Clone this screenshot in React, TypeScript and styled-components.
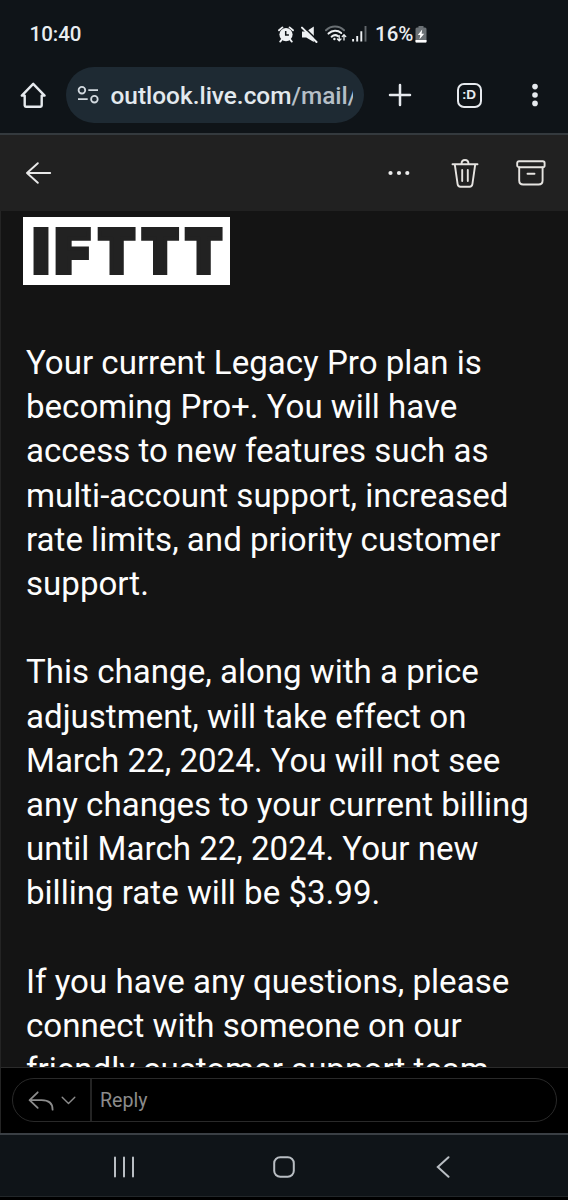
import React from "react";
import styled, { createGlobalStyle } from "styled-components";

const GlobalStyle = createGlobalStyle`
  * { box-sizing: border-box; }
  body { margin: 0; background: #000; }
  svg { display: block; flex: none; }
`;

const Phone = styled.div`
  width: 568px;
  height: 1200px;
  display: flex;
  flex-direction: column;
  overflow: hidden;
  background: #0f1418;
  font-family: Roboto, "Liberation Sans", sans-serif;
  color: #e9edf0;
`;

const StatusBar = styled.header`
  height: 67px;
  padding: 1px 141px 0 29.5px;
  display: flex;
  align-items: center;
  justify-content: space-between;
`;

const Clock = styled.span`
  font-size: 20.5px;
  font-weight: 500;
`;

const StatusIcons = styled.div`
  display: flex;
  align-items: center;
`;

const IconSlot = styled.span<{ $gap: number }>`
  margin-right: ${(p) => p.$gap}px;
`;

const Battery = styled.span`
  font-size: 20.5px;
  font-weight: 500;
  margin-left: 8px;
  width: 40px;
  white-space: nowrap;
`;

const BrowserBar = styled.div`
  height: 68px;
  padding-left: 20px;
  display: flex;
  align-items: flex-start;
  border-bottom: 2px solid #343a3e;
`;

const BarButton = styled.button<{ $width: number }>`
  width: ${(p) => p.$width}px;
  height: 56px;
  padding: 0;
  border: 0;
  background: none;
  color: #e6eaee;
  display: flex;
  align-items: center;
  justify-content: center;
`;

const AddressBar = styled.div`
  width: 298px;
  height: 56px;
  margin-left: 20px;
  padding: 0 11px;
  border-radius: 28px;
  background: #1e2a33;
  display: flex;
  align-items: center;
`;

const Address = styled.span`
  margin-left: 11.5px;
  width: 242.5px;
  overflow: hidden;
  white-space: nowrap;
  font-size: 24.4px;
  font-weight: 500;
  color: #e3e9ee;
`;

const AddressPath = styled.span`
  color: #b5bfc7;
`;

const MailToolbar = styled.nav`
  height: 76px;
  padding: 0 22.5px 1px 25px;
  background: #212121;
  display: flex;
  align-items: center;
`;

const ToolbarActions = styled.div`
  margin-left: auto;
  display: flex;
  align-items: center;
  gap: 37px;
`;

const MoreSlot = styled.span`
  margin-right: 4px;
`;

const Message = styled.main`
  height: 856px;
  padding: 6px 0 0 22px;
  overflow: hidden;
  background: #141414;
  border-left: 1px solid #242424;
`;

const LogoPlate = styled.div`
  width: 207px;
  height: 68px;
  background: #fff;
`;

const LogoText = styled.text`
  font-family: Inter, sans-serif;
  font-weight: 900;
  font-size: 61px;
  fill: #222;
  stroke: #222;
  stroke-width: 4px;
  stroke-linejoin: miter;
`;

const Copy = styled.div`
  padding: 56px 0 0 3px;
  font-size: 33.1px;
  line-height: 44.2px;
  color: #fdfdfd;
  white-space: pre;
`;

const Paragraph = styled.p`
  margin: 0 0 44.2px;
`;

const ReplyArea = styled.footer`
  height: 66px;
  padding: 10px 11px 0 11px;
  background: #000;
  border-top: 1px solid #2b2b2b;
  border-left: 1px solid #242424;
`;

const ReplyBox = styled.div`
  height: 44px;
  border: 1px solid #292929;
  border-radius: 22px;
  display: flex;
  align-items: stretch;
`;

const ReplyMode = styled.div`
  width: 79px;
  padding: 1px 0 0 14.5px;
  border-right: 2px solid #242424;
  display: flex;
  align-items: center;
  gap: 7px;
`;

const ReplyLabel = styled.span`
  padding-left: 8px;
  font-size: 19.6px;
  line-height: 43px;
  color: #8b8b8b;
`;

const SystemNav = styled.div`
  height: 63px;
  border-top: 2px solid #3a3f44;
  display: flex;
  align-items: center;
  padding: 2px 45px 0 44px;
`;

const NavButton = styled.div`
  flex: 1;
  display: flex;
  justify-content: center;
  color: #b9bec3;
`;

const ScreenEdge = styled.div`
  height: 4px;
  border-top: 1px solid #22272a;
  background: #000;
`;

const AlarmIcon = () => (
  <svg width="16" height="17" viewBox="0 0 16 17">
    <circle cx="8" cy="8.6" r="6.6" fill="#eef1f3" />
    <path d="M1 4.3 4.4 1.4M15 4.3 11.6 1.4M3.8 13.6 2.2 15.6M12.2 13.6l1.6 2" stroke="#eef1f3" strokeWidth="1.8" strokeLinecap="round" />
    <path d="M7.7 5v4h3.2" fill="none" stroke="#0f1418" strokeWidth="1.5" />
  </svg>
);

const MuteIcon = () => (
  <svg width="17" height="17" viewBox="0 0 17 17">
    <path d="M1 5.400h4.200L12.800 0.500v15.600L5.200 11.600H1z" fill="#eef1f3" />
    <path d="M2 .2 16.400 14.400" stroke="#0f1418" strokeWidth="1.500" />
    <path d="M1 1.600 15.500 16" stroke="#eef1f3" strokeWidth="2" strokeLinecap="round" />
  </svg>
);

const WifiIcon = () => (
  <svg width="22" height="18" viewBox="0 0 22 18" fill="none" strokeLinecap="round">
    <path d="M1 5.2C6 .3 14 .3 19 5.2" stroke="#6a7074" strokeWidth="2" />
    <path d="M3.5 8.6C7.4 5 12.6 5 16.2 8" stroke="#eef1f3" strokeWidth="2" />
    <path d="M6.6 11.7c2-1.8 4.4-2 6.4-.6" stroke="#eef1f3" strokeWidth="2" />
    <circle cx="9.4" cy="14" r="1.2" fill="#eef1f3" />
    <path d="M14.2 10.6v5M12.4 14l1.8 1.9L16 14M19 15v-5M17.2 11.6 19 9.7l1.8 1.9" stroke="#eef1f3" strokeWidth="1.3" />
  </svg>
);

const SignalIcon = () => (
  <svg width="15" height="16" viewBox="0 0 15 16">
    <path d="M1.1 13v2.6M5.2 10v5.6M9.3 5.3v10.3" stroke="#eef1f3" strokeWidth="1.9" />
    <path d="M13.5 0v15.6" stroke="#62686c" strokeWidth="1.9" />
  </svg>
);

const BatteryIcon = () => (
  <svg width="12" height="17" viewBox="0 0 12 17">
    <path d="M3.500 0h5v1.600H10q1.500 0 1.500 1.500V15.400q0 1.200-1.400 1.200H1.900Q.5 16.600.5 15.400V3.100Q.5 1.600 2 1.600h1.500z" fill="#6b7175" />
    <path d="M.5 14h11v1.400q0 1.200-1.400 1.200H1.900Q.5 16.600.5 15.400z" fill="#fff" />
    <path d="M7.200 3.600 2.800 9h2.500l-.8 4.200L9.200 7.800H6.600z" fill="#fff" />
  </svg>
);

const HomeIcon = () => (
  <svg width="28" height="28" viewBox="0 0 28 28" fill="none" stroke="currentColor" strokeWidth="2.400" strokeLinejoin="round" strokeLinecap="round">
    <path d="M2.800 14.600h2.900v9.900q0 1.200 1.200 1.200h14.600q1.200 0 1.200-1.200v-9.900h2.900L14.200 2.800z" />
  </svg>
);

const SiteIcon = () => (
  <svg width="22" height="18" viewBox="0 0 22 18" fill="none" stroke="#d3dae0" strokeWidth="1.800">
    <circle cx="4.900" cy="4.200" r="3.300" />
    <path d="M11.300 4.200H21M1 13.200h9.700" />
    <circle cx="17.400" cy="13.200" r="3.300" />
  </svg>
);

const PlusIcon = () => (
  <svg width="24" height="24" viewBox="0 0 24 24" stroke="currentColor" strokeWidth="2.500" strokeLinecap="round">
    <path d="M12 2v20M2 12h20" />
  </svg>
);

const TabCount = styled.span`
  width: 25px;
  height: 25px;
  border: 2px solid #e6eaee;
  border-radius: 7px;
  font-size: 13.5px;
  font-weight: 700;
  line-height: 20px;
  text-align: center;
`;

const MenuIcon = () => (
  <svg width="8" height="26" viewBox="0 0 8 26" fill="currentColor">
    <circle cx="4" cy="4.600" r="2.800" />
    <circle cx="4" cy="13" r="2.800" />
    <circle cx="4" cy="21.400" r="2.800" />
  </svg>
);

const BackArrow = () => (
  <svg width="27" height="22" viewBox="0 0 27 22" fill="none" stroke="#e8e8e8" strokeWidth="1.900" strokeLinecap="round" strokeLinejoin="round">
    <path d="M25.200 11H2M12.800 1.200 2 11l10.800 9.800" />
  </svg>
);

const MoreIcon = () => (
  <svg width="22" height="6" viewBox="0 0 22 6" fill="#ededed">
    <circle cx="2.500" cy="3" r="2.100" />
    <circle cx="11" cy="3" r="2.100" />
    <circle cx="19.300" cy="3" r="2.100" />
  </svg>
);

const TrashIcon = () => (
  <svg width="28" height="30" viewBox="0 0 28 30" fill="none" stroke="#e6e4e1" strokeWidth="1.900" strokeLinecap="round" strokeLinejoin="round">
    <path d="M1.500 6.200h25M10.500 6q0-4 3.500-4t3.500 4M3.800 6.500l2.800 19.700q.4 2.600 2.800 2.600h9.200q2.400 0 2.800-2.600L24.200 6.500M11.200 12v11M16.800 12v11" />
  </svg>
);

const ArchiveIcon = () => (
  <svg width="30" height="26" viewBox="0 0 30 26" fill="none" stroke="#e6e4e1" strokeWidth="1.900" strokeLinecap="round" strokeLinejoin="round">
    <rect x="1.200" y="1.200" width="27.400" height="6" rx="1.800" />
    <path d="M3.200 7.500v13q0 4 4 4h15.400q4 0 4-4v-13M11.500 13.800h7" />
  </svg>
);

const ReplyIcon = () => (
  <svg width="26" height="20" viewBox="0 0 26 20" fill="none" stroke="#8c8c8c" strokeWidth="1.800" strokeLinecap="round" strokeLinejoin="round">
    <path d="M9.700 1.300 1.600 9.200l8.100 7.600M1.600 9.200h12q11 0 11 9.500" />
  </svg>
);

const ChevronIcon = () => (
  <svg width="15" height="9" viewBox="0 0 15 9" fill="none" stroke="#8c8c8c" strokeWidth="1.400" strokeLinecap="round" strokeLinejoin="round">
    <path d="m1.200 1.200 6.300 6.300 6.300-6.300" />
  </svg>
);

const logoLetters = [
  { char: "I", x: 9.800, scale: 0.93 },
  { char: "F", x: 31.700, scale: 1 },
  { char: "T", x: 75, scale: 0.89 },
  { char: "T", x: 118.500, scale: 0.89 },
  { char: "T", x: 162, scale: 0.89 },
];

const Logo = () => (
  <LogoPlate>
    <svg width="207" height="68" viewBox="0 0 207 68" overflow="visible">
      {logoLetters.map((l, i) => (
        <LogoText key={i} transform={`translate(${l.x} 56) scale(${l.scale} 1)`}>
          {l.char}
        </LogoText>
      ))}
    </svg>
  </LogoPlate>
);

const paragraphs = [
  "Your current Legacy Pro plan is\nbecoming Pro+. You will have\naccess to new features such as\nmulti-account support, increased\nrate limits, and priority customer\nsupport.",
  "This change, along with a price\nadjustment, will take effect on\nMarch 22, 2024. You will not see\nany changes to your current billing\nuntil March 22, 2024. Your new\nbilling rate will be $3.99.",
  "If you have any questions, please\nconnect with someone on our\nfriendly customer support team",
];

export default function App() {
  return (
    <Phone>
      <GlobalStyle />
      <StatusBar>
        <Clock>10:40</Clock>
        <StatusIcons>
          <IconSlot $gap={7}><AlarmIcon /></IconSlot>
          <IconSlot $gap={7}><MuteIcon /></IconSlot>
          <IconSlot $gap={5}><WifiIcon /></IconSlot>
          <SignalIcon />
          <Battery>16%</Battery>
          <BatteryIcon />
        </StatusIcons>
      </StatusBar>
      <BrowserBar>
        <BarButton $width={26}><HomeIcon /></BarButton>
        <AddressBar>
          <SiteIcon />
          <Address>outlook.live.com<AddressPath>/mail/</AddressPath></Address>
        </AddressBar>
        <BarButton $width={72}><PlusIcon /></BarButton>
        <BarButton $width={66}><TabCount>:D</TabCount></BarButton>
        <BarButton $width={66}><MenuIcon /></BarButton>
      </BrowserBar>
      <MailToolbar>
        <BackArrow />
        <ToolbarActions>
          <MoreSlot><MoreIcon /></MoreSlot>
          <TrashIcon />
          <ArchiveIcon />
        </ToolbarActions>
      </MailToolbar>
      <Message>
        <Logo />
        <Copy>
          {paragraphs.map((text) => (
            <Paragraph key={text}>{text}</Paragraph>
          ))}
        </Copy>
      </Message>
      <ReplyArea>
        <ReplyBox>
          <ReplyMode>
            <ReplyIcon />
            <ChevronIcon />
          </ReplyMode>
          <ReplyLabel>Reply</ReplyLabel>
        </ReplyBox>
      </ReplyArea>
      <SystemNav>
        <NavButton>
          <svg width="22" height="22" viewBox="0 0 22 22" stroke="currentColor" strokeWidth="2" strokeLinecap="round">
            <path d="M2 1.500v19M11 1.500v19M20 1.500v19" />
          </svg>
        </NavButton>
        <NavButton>
          <svg width="22" height="22" viewBox="0 0 22 22" fill="none" stroke="currentColor" strokeWidth="2">
            <rect x="1.200" y="1.200" width="19.600" height="19.600" rx="6" />
          </svg>
        </NavButton>
        <NavButton>
          <svg width="14" height="22" viewBox="0 0 14 22" fill="none" stroke="currentColor" strokeWidth="2" strokeLinecap="round">
            <path d="M12.500 1.200 1.800 11l10.700 9.800" />
          </svg>
        </NavButton>
      </SystemNav>
      <ScreenEdge />
    </Phone>
  );
}
